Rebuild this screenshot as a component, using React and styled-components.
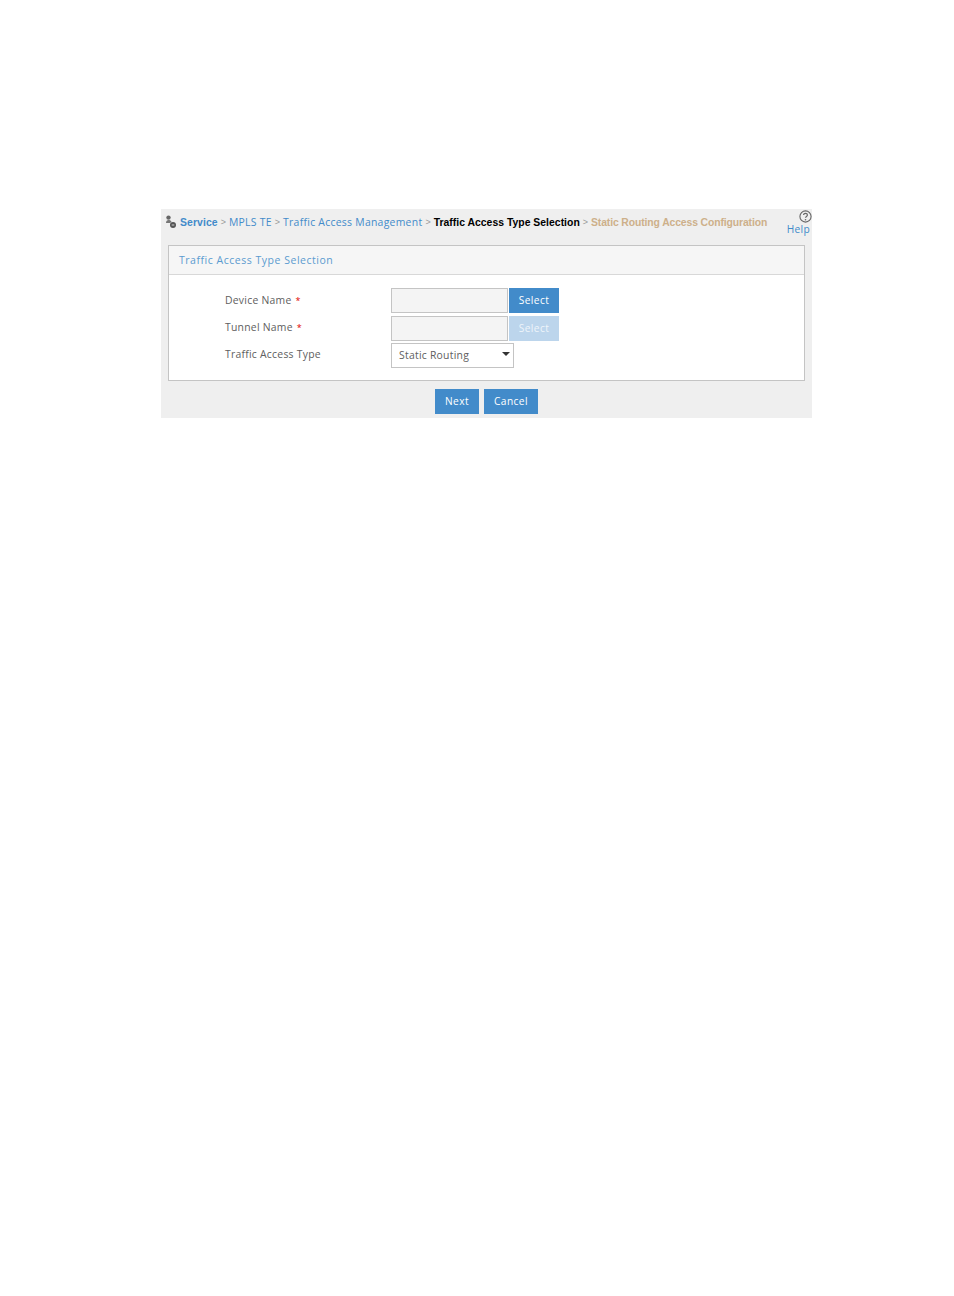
import React from 'react';
import styled, { createGlobalStyle } from 'styled-components';

const blue = '#428bca';
const lineColor = '#c4c4c4';

const GlobalStyle = createGlobalStyle`
  html, body { margin: 0; padding: 0; background: #fff; }
  body { font-family: "Open Sans", "Liberation Sans", sans-serif; }
`;

const Page = styled.div`
  width: 954px;
  height: 1296px;
  padding: 209px 0 0 161px;
  box-sizing: border-box;
`;

const Frame = styled.div`
  width: 651px;
  height: 209px;
  background: #efefef;
  padding: 0 2px 0 7px;
  box-sizing: border-box;
  display: flex;
  flex-direction: column;
`;

const TopBar = styled.div`
  height: 36px;
  margin-left: -3px;
  display: flex;
  justify-content: space-between;
  align-items: flex-start;
`;

const Crumbs = styled.div`
  display: flex;
  align-items: center;
  height: 26px;
  white-space: nowrap;
`;

const CrumbIcon = styled.svg`
  width: 12px;
  height: 14px;
  margin-right: 3px;
`;

const Crumb = styled.span`
  font-family: ${p => (p.$bold ? '"Liberation Sans", Arial, sans-serif' : '"Open Sans", sans-serif')};
  font-size: 10.4px;
  font-weight: ${p => (p.$bold ? 700 : 400)};
  letter-spacing: ${p => p.$spacing || '0.28px'};
  color: ${p => p.$color || blue};
`;

const Sep = styled.span`
  font-family: "Liberation Sans", sans-serif;
  font-size: 9px;
  color: #999;
  margin: 0 3px;
`;

const Help = styled.div`
  display: flex;
  flex-direction: column;
  align-items: flex-end;
  font-size: 10.2px;
  letter-spacing: 0.3px;
  line-height: 13px;
  color: ${blue};
  padding-top: 1px;
`;

const HelpIcon = styled.svg`
  margin-right: -2px;
`;

const Panel = styled.div`
  width: 637px;
  height: 136px;
  box-sizing: border-box;
  border: 1px solid ${lineColor};
  background: #fff;
`;

const PanelHead = styled.div`
  height: 29px;
  box-sizing: border-box;
  padding-left: 10px;
  display: flex;
  align-items: center;
  background: #f6f6f6;
  border-bottom: 1px solid #d8d8d8;
  color: #5b9bd0;
  font-size: 10.5px;
  letter-spacing: 0.52px;
`;

const Form = styled.div`
  padding: 13px 0 0 56px;
  display: flex;
  flex-direction: column;
`;

const Row = styled.div`
  display: flex;
  align-items: center;
  height: 25px;
  margin-bottom: ${p => p.$gap || 3}px;
`;

const Label = styled.div`
  width: 166px;
  margin-top: ${p => (p.$up ? -4 : -2)}px;
  font-size: 10.4px;
  letter-spacing: 0.25px;
  color: #606060;
`;

const Star = styled.span`
  color: #e00000;
  font-size: 9px;
  margin-left: 4px;
`;

const Input = styled.div`
  width: 117px;
  height: 25px;
  box-sizing: border-box;
  border: 1px solid ${lineColor};
  background: #f4f4f4;
  margin-right: 1px;
`;

const Button = styled.button`
  height: 25px;
  width: ${p => p.$w}px;
  padding: 0 0 2px;
  border: 0;
  background: ${p => (p.disabled ? '#bcd5ec' : blue)};
  color: ${p => (p.disabled ? '#eef4fa' : '#fff')};
  font-family: "Open Sans", sans-serif;
  font-size: 10.2px;
  letter-spacing: 0.4px;
`;

const SelectBox = styled.div`
  width: 123px;
  height: 25px;
  box-sizing: border-box;
  border: 1px solid ${lineColor};
  background: #fff;
  padding: 0 3px 2px 7px;
  display: flex;
  align-items: center;
  justify-content: space-between;
  font-size: 10.4px;
  letter-spacing: 0.25px;
  color: #606060;
`;

const Caret = styled.span`
  width: 0;
  height: 0;
  margin-bottom: 1px;
  border-left: 4px solid transparent;
  border-right: 4px solid transparent;
  border-top: 4px solid #333;
`;

const Actions = styled.div`
  display: flex;
  justify-content: center;
  gap: 5px;
  margin-top: 8px;
  margin-left: -5px;
`;

export default function App() {
  return (
    <Page>
      <GlobalStyle />
      <Frame>
        <TopBar>
          <Crumbs>
            <CrumbIcon viewBox="0 0 12 14">
              <circle cx="3.500" cy="2.600" r="2.200" fill="#666" />
              <path d="M1 8c0-2 1-3 2.500-3S6 5.500 6.500 7L5 8z" fill="#777" />
              <circle cx="8" cy="10" r="3" fill="#555" />
              <path d="M6.700 10h2.600" stroke="#ddd" strokeWidth="0.900" />
            </CrumbIcon>
            <Crumb $bold $spacing="0.1px">Service</Crumb>
            <Sep>&gt;</Sep>
            <Crumb>MPLS TE</Crumb>
            <Sep>&gt;</Sep>
            <Crumb>Traffic Access Management</Crumb>
            <Sep>&gt;</Sep>
            <Crumb $bold $color="#000" $spacing="0.02px">Traffic Access Type Selection</Crumb>
            <Sep>&gt;</Sep>
            <Crumb $bold $color="#cdb08a" $spacing="-0.12px">Static Routing Access Configuration</Crumb>
          </Crumbs>
          <Help>
            <HelpIcon width="13" height="13" viewBox="0 0 13 13">
              <circle cx="6.500" cy="6.500" r="5.600" fill="none" stroke="#666" strokeWidth="1.100" />
              <path d="M4.600 5.100c0-2.300 3.800-2.300 3.800 0 0 1.400-1.900 1.300-1.900 2.700" fill="none" stroke="#666" strokeWidth="1.200" />
              <circle cx="6.500" cy="9.800" r="0.800" fill="#666" />
            </HelpIcon>
            Help
          </Help>
        </TopBar>
        <Panel>
          <PanelHead>Traffic Access Type Selection</PanelHead>
          <Form>
            <Row>
              <Label>Device Name<Star>*</Star></Label>
              <Input />
              <Button $w={50}>Select</Button>
            </Row>
            <Row $gap={2}>
              <Label $up>Tunnel Name<Star>*</Star></Label>
              <Input />
              <Button $w={50} disabled>Select</Button>
            </Row>
            <Row>
              <Label $up>Traffic Access Type</Label>
              <SelectBox>
                Static Routing
                <Caret />
              </SelectBox>
            </Row>
          </Form>
        </Panel>
        <Actions>
          <Button $w={44}>Next</Button>
          <Button $w={54}>Cancel</Button>
        </Actions>
      </Frame>
    </Page>
  );
}
